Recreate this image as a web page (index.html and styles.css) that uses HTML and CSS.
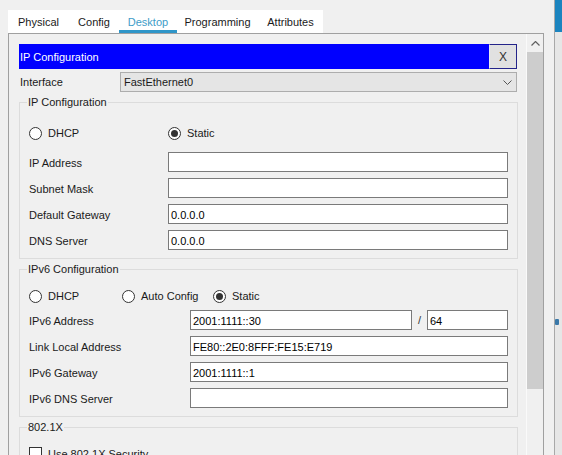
FILE: index.html
```html
<!DOCTYPE html>
<html>
<head>
<meta charset="utf-8">
<link rel="stylesheet" href="styles.css">
</head>
<body>
<div class="app">
  <div class="main">
    <div class="tabs">
      <div class="tab t-phys">Physical</div>
      <div class="tab t-conf">Config</div>
      <div class="tab t-desk active">Desktop</div>
      <div class="tab t-prog">Programming</div>
      <div class="tab t-attr">Attributes</div>
    </div>
    <div class="panel">
      <div class="content">
        <div class="titlebar">
          <span class="title">IP Configuration</span>
          <div class="close">X</div>
        </div>
        <div class="iface-row">
          <span class="iface-label">Interface</span>
          <div class="select">
            <span>FastEthernet0</span>
            <svg class="chev" width="9" height="5" viewBox="0 0 9 5"><path d="M0.5 0.5 L4.5 4.5 L8.5 0.5" fill="none" stroke="#555" stroke-width="1"/></svg>
          </div>
        </div>

        <fieldset class="group g1">
          <legend>IP Configuration</legend>
          <div class="radio-row">
            <label class="opt opt-w1"><span class="radio"></span>DHCP</label>
            <label class="opt"><span class="radio on"></span>Static</label>
          </div>
          <div class="rows">
            <div class="row"><span class="lbl">IP Address</span><div class="input"></div></div>
            <div class="row"><span class="lbl">Subnet Mask</span><div class="input"></div></div>
            <div class="row"><span class="lbl">Default Gateway</span><div class="input">0.0.0.0</div></div>
            <div class="row"><span class="lbl">DNS Server</span><div class="input">0.0.0.0</div></div>
          </div>
        </fieldset>

        <fieldset class="group g2">
          <legend>IPv6 Configuration</legend>
          <div class="radio-row">
            <label class="opt opt-w2"><span class="radio"></span>DHCP</label>
            <label class="opt opt-w3"><span class="radio"></span>Auto Config</label>
            <label class="opt"><span class="radio on"></span>Static</label>
          </div>
          <div class="rows">
            <div class="row row-prefix"><span class="lbl">IPv6 Address</span><div class="input">2001:1111::30</div><span class="slash">/</span><div class="input">64</div></div>
            <div class="row"><span class="lbl">Link Local Address</span><div class="input">FE80::2E0:8FFF:FE15:E719</div></div>
            <div class="row"><span class="lbl">IPv6 Gateway</span><div class="input">2001:1111::1</div></div>
            <div class="row"><span class="lbl">IPv6 DNS Server</span><div class="input"></div></div>
          </div>
        </fieldset>

        <fieldset class="group g3">
          <legend>802.1X</legend>
          <label class="opt"><span class="check"></span>Use 802.1X Security</label>
        </fieldset>
      </div>
      <div class="scrollbar">
        <div class="sb-up"><svg width="9" height="5" viewBox="0 0 9 5"><path d="M0.5 4.5 L4.5 0.5 L8.5 4.5" fill="none" stroke="#606060" stroke-width="1.2"/></svg></div>
        <div class="sb-thumb"></div>
        <div class="sb-track"></div>
      </div>
    </div>
  </div>
  <div class="side">
    <div class="side-gap"></div>
    <div class="side-line"></div>
    <div class="side-strip">
      <div class="side-top"></div>
      <div class="side-icon"></div>
    </div>
  </div>
</div>
</body>
</html>
```

FILE: styles.css
```css
html, body {
  margin: 0;
  padding: 0;
}
body {
  background: #f0f0f0;
  font-family: "Liberation Sans", Arial, sans-serif;
  font-size: 11px;
  color: #1a1a1a;
  height: 455px;
  overflow: hidden;
}
.app {
  display: flex;
  height: 455px;
}
.main {
  width: 536px;
  margin-left: 8px;
  padding-top: 10px;
  display: flex;
  flex-direction: column;
  overflow: hidden;
}
.tabs {
  display: flex;
  width: 315px;
  height: 23px;
  background: #fff;
  flex: none;
}
.tab {
  height: 23px;
  display: flex;
  align-items: center;
  justify-content: center;
  padding-top: 1px;
  box-sizing: border-box;
}
.t-phys { width: 61px; }
.t-conf { width: 50px; }
.t-desk { width: 58px; }
.t-prog { width: 81px; }
.t-attr { width: 65px; }
.tab.active {
  color: #3d9cc8;
  box-shadow: inset 0 -3px 0 #2f96c9;
}
.panel {
  flex: none;
  height: 460px;
  border: 1px solid #a0a0a0;
  display: flex;
}
.content {
  flex: 1;
  min-width: 0;
  padding: 10px 9px 0 10px;
}
.titlebar {
  display: flex;
  height: 25px;
  background: #0000ff;
}
.title {
  flex: 1;
  color: #fff;
  line-height: 25px;
  padding: 1px 0 0 1px;
}
.close {
  width: 28px;
  box-sizing: border-box;
  background: #e1e1e1;
  border: 1px solid #24248a;
  border-left-color: #e8e8f0;
  display: flex;
  align-items: center;
  justify-content: center;
  font-size: 12px;
  color: #333;
}
.iface-row {
  display: flex;
  align-items: center;
  height: 20px;
  margin-top: 3px;
}
.iface-label {
  width: 100px;
  padding-left: 1px;
}
.select {
  flex: 1;
  height: 20px;
  box-sizing: border-box;
  border: 1px solid #adadad;
  background: #e5e5e5;
  display: flex;
  align-items: center;
  justify-content: space-between;
  padding: 0 4px 0 3px;
}
.chev { display: block; }
.group {
  margin: 4px -1px 0 0;
  padding: 14px 9px 8px 9px;
  border: 1px solid #dcdcdc;
  min-width: 0;
}
.group legend {
  padding: 0 1px;
  margin-left: -2px;
  line-height: 13px;
}
.g2 { padding-top: 10px; }
.g3 { padding-top: 13px; padding-bottom: 30px; }
.radio-row {
  display: flex;
  align-items: center;
  height: 20px;
}
.opt {
  display: flex;
  align-items: center;
  gap: 6px;
}
.opt-w1 { width: 139px; }
.opt-w2 { width: 93px; }
.opt-w3 { width: 91px; }
.radio {
  width: 13px;
  height: 13px;
  box-sizing: border-box;
  border: 1px solid #333;
  border-radius: 50%;
  background: #fff;
  display: flex;
  align-items: center;
  justify-content: center;
}
.radio.on::after {
  content: "";
  width: 7px;
  height: 7px;
  border-radius: 50%;
  background: #333;
}
.check {
  width: 13px;
  height: 13px;
  box-sizing: border-box;
  border: 1px solid #333;
  background: #fff;
}
.rows {
  display: flex;
  flex-direction: column;
  gap: 6px;
  margin-top: 9px;
}
.g2 .rows { margin-top: 4px; }
.row {
  display: grid;
  grid-template-columns: 139px 1fr;
  align-items: center;
}
.lbl { padding-top: 1px; }
.g2 .row { grid-template-columns: 161px 1fr; }
.g2 .row-prefix { grid-template-columns: 161px 222px 15px 1fr; }
.slash {
  text-align: center;
  color: #333;
}
.input {
  height: 20px;
  box-sizing: border-box;
  border: 1px solid #7a7a7a;
  background: #fff;
  padding: 1px 0 0 2px;
  line-height: 18px;
  color: #000;
}
.scrollbar {
  width: 17px;
  flex: none;
  display: flex;
  flex-direction: column;
  background: #f0f0f0;
  box-shadow: inset 1px 0 0 #fafafa;
}
.sb-up {
  height: 18px;
  display: flex;
  align-items: center;
  justify-content: center;
  padding-left: 1px;
}
.sb-up svg { display: block; }
.sb-thumb {
  height: 337px;
  margin-left: 1px;
  background: #cdcdcd;
}
.sb-track {
  flex: 1;
}
.side {
  flex: 1;
  display: flex;
}
.side-gap {
  width: 10px;
}
.side-line {
  width: 1px;
  background: #a8a8a8;
}
.side-strip {
  flex: 1;
  background: #e6e6e6;
  display: flex;
  flex-direction: column;
}
.side-top {
  height: 32px;
  background: #1b84bf;
}
.side-icon {
  width: 4px;
  height: 6px;
  margin-top: 287px;
  background: #3a78a8;
  border-radius: 1px;
}
```
